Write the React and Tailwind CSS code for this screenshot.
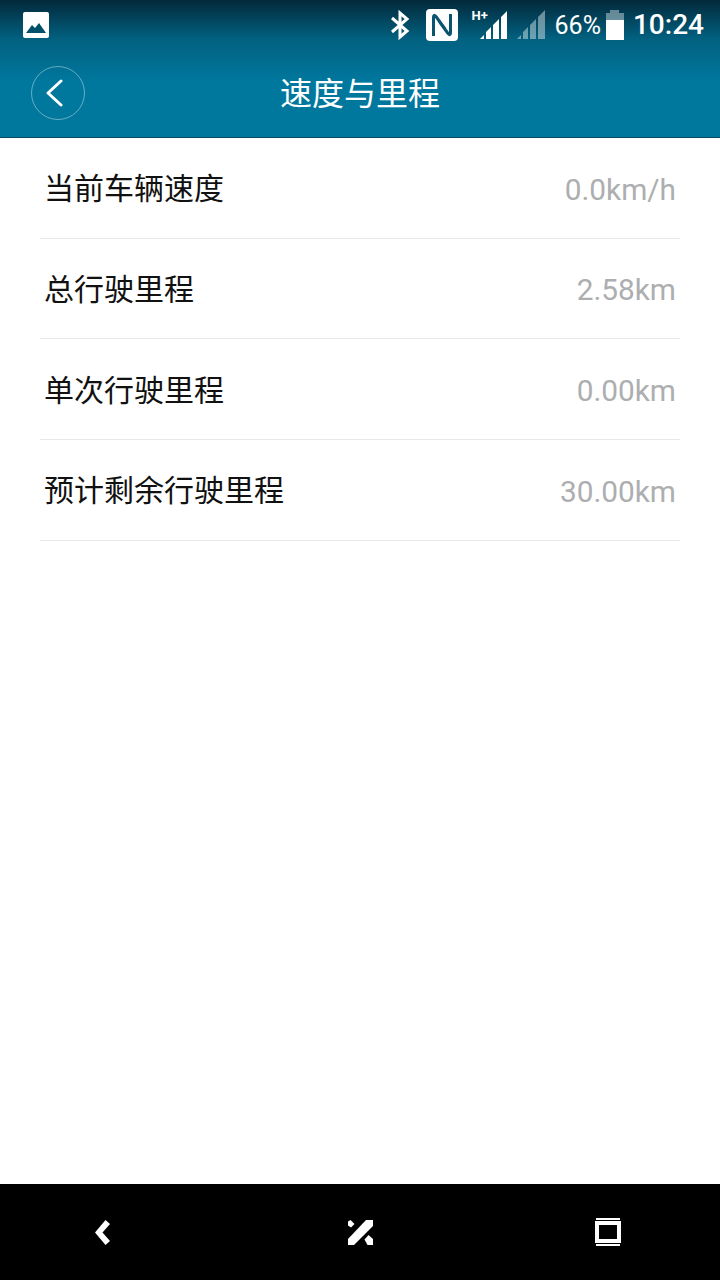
const font = { fontFamily: '"Roboto", "Noto Sans CJK SC", sans-serif' };

const rows = [
  ["当前车辆速度", "0.0km/h"],
  ["总行驶里程", "2.58km"],
  ["单次行驶里程", "0.00km"],
  ["预计剩余行驶里程", "30.00km"],
];

function StatusBar() {
  return (
    <div className="h-[50px] flex items-center pl-[23px] pr-[16px] text-white">
      <svg width="26" height="26" viewBox="0 0 26 26">
        <rect width="26" height="26" rx="2" fill="#fff" />
        <path d="M3 21 L9 13 L12 16 L16 11 L23 21 Z" fill="#02506a" />
      </svg>
      <div className="ml-auto flex items-center">
        <svg width="20" height="30" viewBox="0 0 20 30" fill="none" stroke="#fff" strokeWidth="3">
          <path d="M2 8 L17 21 L10 27 V3 L17 9 L2 22" />
        </svg>
        <svg className="ml-[16px]" width="32" height="32" viewBox="0 0 32 32">
          <rect width="32" height="32" rx="4" fill="#fff" />
          <path d="M7.5 27 V8 Q7.5 5 10 7.5 L19 20 M24.5 5 V24 Q24.5 27 22 24.5 L13 12" fill="none" stroke="#0a5470" strokeWidth="3" />
        </svg>
        <div className="relative ml-[16px] w-[36px] h-[32px]">
          <span className="absolute left-[-2px] top-[0px] text-[13px] font-bold leading-[14px]">H+</span>
          <svg className="absolute left-0 top-0" width="36" height="32" viewBox="0 0 36 32" fill="#fff">
            <path d="M6 34 L10 30 V34Z M12 34 V27 L17 22 V34Z M19 34 V20 L25 14 V34Z M27 34 V12 L33 6 V34Z" transform="translate(0,-4)" />
          </svg>
        </div>
        <svg className="ml-[7px]" width="29" height="32" viewBox="0 0 29 32" fill="#fff" fillOpacity="0.42">
          <path d="M0 30 L4 26 V30Z M6 30 V23 L11 18 V30Z M13 30 V16 L19 10 V30Z M21 30 V8 L28 1 V30Z" />
        </svg>
        <span className="ml-[9px] text-[25px] leading-none" style={font}>66%</span>
        <div className="ml-[5px] w-[18px] h-[30px] flex flex-col items-center">
          <div className="w-[9px] h-[3px] bg-white/40" />
          <div className="w-full h-[7px] bg-white/40" />
          <div className="w-full flex-1 bg-white" />
        </div>
        <span className="ml-[9px] text-[28px] font-medium leading-none" style={font}>10:24</span>
      </div>
    </div>
  );
}

function Row({ label, value }) {
  return (
    <div className="mx-[40px] h-[100.7px] flex items-center justify-between px-[4px] border-b border-[#e8e8e8]">
      <span className="mt-[2px] text-[30px] text-[#111111]" style={font}>{label}</span>
      <span className="mt-[4px] text-[29.8px] text-[#acaeb0]" style={font}>{value}</span>
    </div>
  );
}

export default function App() {
  return (
    <div className="w-[720px] h-[1280px] flex flex-col bg-white" style={font}>
      <header className="h-[138px] bg-[linear-gradient(180deg,#02293a_0%,#02607f_28%,#00789e_60%,#00779c_100%)] border-b border-[#044a60]">
        <StatusBar />
        <div className="relative h-[87px] flex items-center justify-center">
          <button className="absolute left-[31px] top-[16px] w-[54px] h-[54px] rounded-full border border-white/40 flex items-center justify-center pr-[8px]">
            <svg width="17" height="28" viewBox="0 0 17 28" fill="none" stroke="#fff" strokeWidth="3" strokeLinecap="round" strokeLinejoin="round">
              <path d="M15 2 L2 14 L15 26" />
            </svg>
          </button>
          <h1 className="text-[32px] text-white font-normal">速度与里程</h1>
        </div>
      </header>
      <main className="flex-1">
        {rows.map(([label, value]) => (
          <Row key={label} label={label} value={value} />
        ))}
      </main>
      <nav className="h-[96px] bg-black flex items-center">
        <div className="flex-1 flex justify-center">
          <svg className="mr-[34px]" width="16" height="25" viewBox="0 0 16 25" fill="#fff">
            <path d="M10.5 0 L15 4 L7.5 12.5 L15 21 L10.5 25 L0 12.5 Z" />
          </svg>
        </div>
        <div className="flex-1 flex justify-center">
          <svg width="25" height="25" viewBox="0 0 25 25" fill="#fff">
            <path d="M18 0 H25 V6 L6 25 H0 V19 Z" />
            <path d="M2.5 0 L6.5 4 L3 7.5 L0 5.5 V1.5 Z" />
            <path d="M20.5 15 L25 19 V25 H19.5 L16.5 19.5 Z" />
          </svg>
        </div>
        <div className="flex-1 flex justify-center">
          <svg className="ml-[16px]" width="26" height="28" viewBox="0 0 26 28" fill="none" stroke="#fff">
            <path d="M1 1 H25 M1 27 H25" strokeWidth="2" />
            <rect x="2" y="5" width="22" height="18" strokeWidth="4" />
          </svg>
        </div>
      </nav>
    </div>
  );
}
